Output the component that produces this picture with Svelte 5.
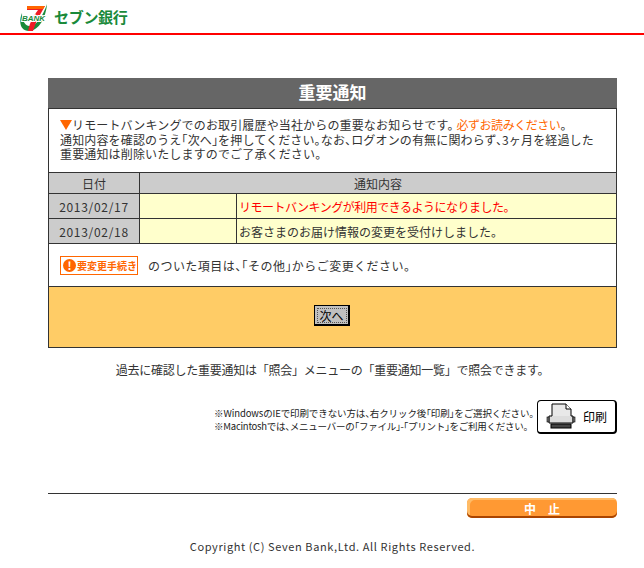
<script>
    const notices = [
        { date: "2013/02/17", text: "リモートバンキングが利用できるようになりました。", unread: true },
        { date: "2013/02/18", text: "お客さまのお届け情報の変更を受付けしました。", unread: false },
    ];
</script>

<header class="top">
    <svg class="logo" width="30" height="32" viewBox="0 0 30 32" aria-hidden="true">
        <path d="M3 12C-1 22 2 30 10 30 20 30 27 16 28 3 25 12 18 26 10 25 5 24 3 18 3 12z" fill="#1a8a3a" />
        <path d="M8 5h18c-4 7-9 15-12 25H9c2-10 7-17 10-21H8z" fill="#ee1c25" />
        <path d="M8 5h18l-2 3H8z" fill="#f60" />
        <text x="3" y="20" class="bank">BANK</text>
    </svg>
    <span class="brand">セブン銀行</span>
</header>

<main class="page">
    <section class="card">
        <h1>重要通知</h1>
        <div class="intro">
            <p>
                <span class="tri"></span>リモートバンキングでのお取引履歴や当社からの重要なお知らせです。
                <span class="orange">必ずお読みください</span>。
            </p>
            <p>通知内容を確認のうえ「次へ」を押してください。なお、ログオンの有無に関わらず、3ヶ月を経過した</p>
            <p>重要通知は削除いたしますのでご了承ください。</p>
        </div>
        <div class="grid">
            <div class="cell head">日付</div>
            <div class="cell head wide">通知内容</div>
            {#each notices as n}
                <div class="cell date">{n.date}</div>
                <div class="cell blank"></div>
                <div class="cell msg" class:red={n.unread}>{n.text}</div>
            {/each}
        </div>
        <div class="legend">
            <span class="badge"><span class="bang">!</span>要変更手続き</span>
            <span class="legend-text">のついた項目は、「その他」からご変更ください。</span>
        </div>
        <div class="action">
            <button type="button" class="next">次へ</button>
        </div>
    </section>

    <p class="history">過去に確認した重要通知は「照会」メニューの「重要通知一覧」で照会できます。</p>

    <div class="print">
        <div class="notes">
            <p>※WindowsのIEで印刷できない方は、右クリック後「印刷」をご選択ください。</p>
            <p>※Macintoshでは、メニューバーの「ファイル」-「プリント」をご利用ください。</p>
        </div>
        <button type="button" class="print-btn">
            <svg width="30" height="27" viewBox="0 0 30 27" aria-hidden="true">
                <path d="M6 1h14l5 5v11H6z" fill="#e8e8e8" stroke="#000" />
                <path d="M20 1v5h5" fill="#fff" stroke="#000" />
                <path d="M6 13H3v7h24v-7h-2" fill="#ddd" stroke="#000" />
                <rect x="1" y="14" width="2" height="5" fill="#777" stroke="#000" stroke-width=".6" />
                <rect x="27" y="14" width="2" height="5" fill="#777" stroke="#000" stroke-width=".6" />
                <rect x="5" y="21" width="20" height="4" fill="#444" stroke="#000" />
            </svg>
            <span>印刷</span>
        </button>
    </div>

    <hr />
    <div class="stop-row">
        <button type="button" class="stop">中　止</button>
    </div>
    <p class="copy">Copyright (C) Seven Bank,Ltd. All Rights Reserved.</p>
</main>

<style>
    :global(body) {
        margin: 0;
        background: #fff;
        color: #333;
        font-family: "Noto Sans CJK JP", "Liberation Sans", sans-serif;
        font-size: 12px;
    }

    p {
        margin: 0;
    }

    .top {
        display: flex;
        align-items: center;
        height: 33px;
        padding-left: 19px;
        gap: 5px;
        border-bottom: 2px solid #f00;
    }

    .logo {
        display: block;
    }

    .bank {
        font: italic bold 8px "Liberation Sans", sans-serif;
        fill: #1a8a3a;
        stroke: #fff;
        stroke-width: 2px;
        paint-order: stroke;
    }

    .brand {
        color: #1a8a3a;
        font-size: 15px;
        font-weight: 700;
        letter-spacing: -0.3px;
    }

    .page {
        width: 569px;
        margin-left: 48px;
        padding-top: 43px;
    }

    .card {
        border: 1px solid #333;
        border-top: 0;
    }

    h1 {
        margin: 0 -1px;
        height: 30px;
        background: #666;
        color: #fff;
        font-size: 17px;
        font-weight: 700;
        line-height: 27px;
        text-align: center;
    }

    .intro {
        border-top: 1px solid #333;
        height: 64px;
        box-sizing: border-box;
        padding: 9px 11px 0;
        line-height: 14.5px;
        white-space: nowrap;
        font-feature-settings: "halt";
        letter-spacing: 0.15px;
    }

    .tri {
        display: inline-block;
        border: 6px solid transparent;
        border-top: 10px solid #f60;
        border-bottom: 0;
    }

    .orange {
        color: #f60;
        letter-spacing: -0.45px;
    }

    .grid {
        display: grid;
        grid-template-columns: 91px 97px 1fr;
        grid-template-rows: 21px 25px 25px;
        border-top: 1px solid #333;
    }

    .cell {
        display: flex;
        align-items: center;
        justify-content: center;
        border-right: 1px solid #333;
        border-bottom: 1px solid #333;
        white-space: nowrap;
    }

    .head,
    .date {
        background: #ccc;
    }

    .wide {
        grid-column: span 2;
        border-right: 0;
    }

    .date {
        letter-spacing: 0.7px;
    }

    .blank,
    .msg {
        background: #ffc;
    }

    .msg {
        justify-content: flex-start;
        padding-left: 2px;
        border-right: 0;
    }

    .red {
        color: #f00;
        letter-spacing: -0.5px;
    }

    .legend {
        display: flex;
        align-items: center;
        gap: 10px;
        height: 42px;
        padding-left: 11px;
    }

    .legend-text {
        font-feature-settings: "halt";
        letter-spacing: 0.45px;
    }

    .badge {
        display: inline-flex;
        align-items: center;
        gap: 1px;
        width: 78px;
        height: 19px;
        box-sizing: border-box;
        border: 1px solid #f60;
        padding-left: 2px;
        background: #fff;
        color: #f60;
        font-size: 10px;
        font-weight: 700;
        white-space: nowrap;
    }

    .bang {
        display: inline-flex;
        align-items: center;
        justify-content: center;
        flex: none;
        width: 13px;
        height: 13px;
        border-radius: 50%;
        background: #f60;
        color: #fff;
        font-size: 11px;
    }

    .action {
        display: flex;
        align-items: center;
        justify-content: center;
        height: 61px;
        padding-bottom: 3px;
        box-sizing: border-box;
        border-top: 1px solid #333;
        background: #fc6;
    }

    .next {
        width: 36px;
        height: 21px;
        margin-right: 1px;
        padding: 0;
        border: 2px solid #000;
        border-top-width: 1px;
        border-left-width: 1px;
        outline: 1px dotted #555;
        outline-offset: -4px;
        background: #c0c0c0;
        color: #000;
        font: 12px "Noto Sans CJK JP", sans-serif;
    }

    .history {
        margin-top: 13px;
        text-align: center;
        letter-spacing: -0.25px;
    }

    .print {
        display: flex;
        justify-content: flex-end;
        align-items: center;
        gap: 3px;
        margin-top: 22px;
    }

    .notes {
        padding-top: 5px;
        color: #222;
        font-size: 9.5px;
        line-height: 13px;
        white-space: nowrap;
        font-feature-settings: "halt";
        letter-spacing: -0.11px;
    }

    .notes p:last-child {
        letter-spacing: -0.25px;
    }

    .print-btn {
        display: flex;
        align-items: center;
        gap: 7px;
        width: 80px;
        height: 34px;
        box-sizing: border-box;
        padding: 0 0 0 8px;
        border: 1px solid #000;
        border-right-width: 2px;
        border-bottom-width: 2px;
        border-radius: 4px;
        background: #fff;
        color: #000;
        font: 12px "Noto Sans CJK JP", sans-serif;
    }

    hr {
        margin: 59px 0 0;
        border: 0;
        border-top: 1px solid #333;
    }

    .stop-row {
        display: flex;
        justify-content: flex-end;
        margin-top: 4px;
    }

    .stop {
        width: 150px;
        height: 20px;
        padding: 0;
        border: 0;
        border-radius: 5px;
        box-shadow: inset 0 -2px 0 #a40, inset 3px 2px 0 #fb6;
        background: #f93;
        color: #fff;
        font: 700 12px "Noto Sans CJK JP", sans-serif;
    }

    .copy {
        margin-top: 20px;
        text-align: center;
        letter-spacing: 0.6px;
        font-size: 11px;
    }
</style>
